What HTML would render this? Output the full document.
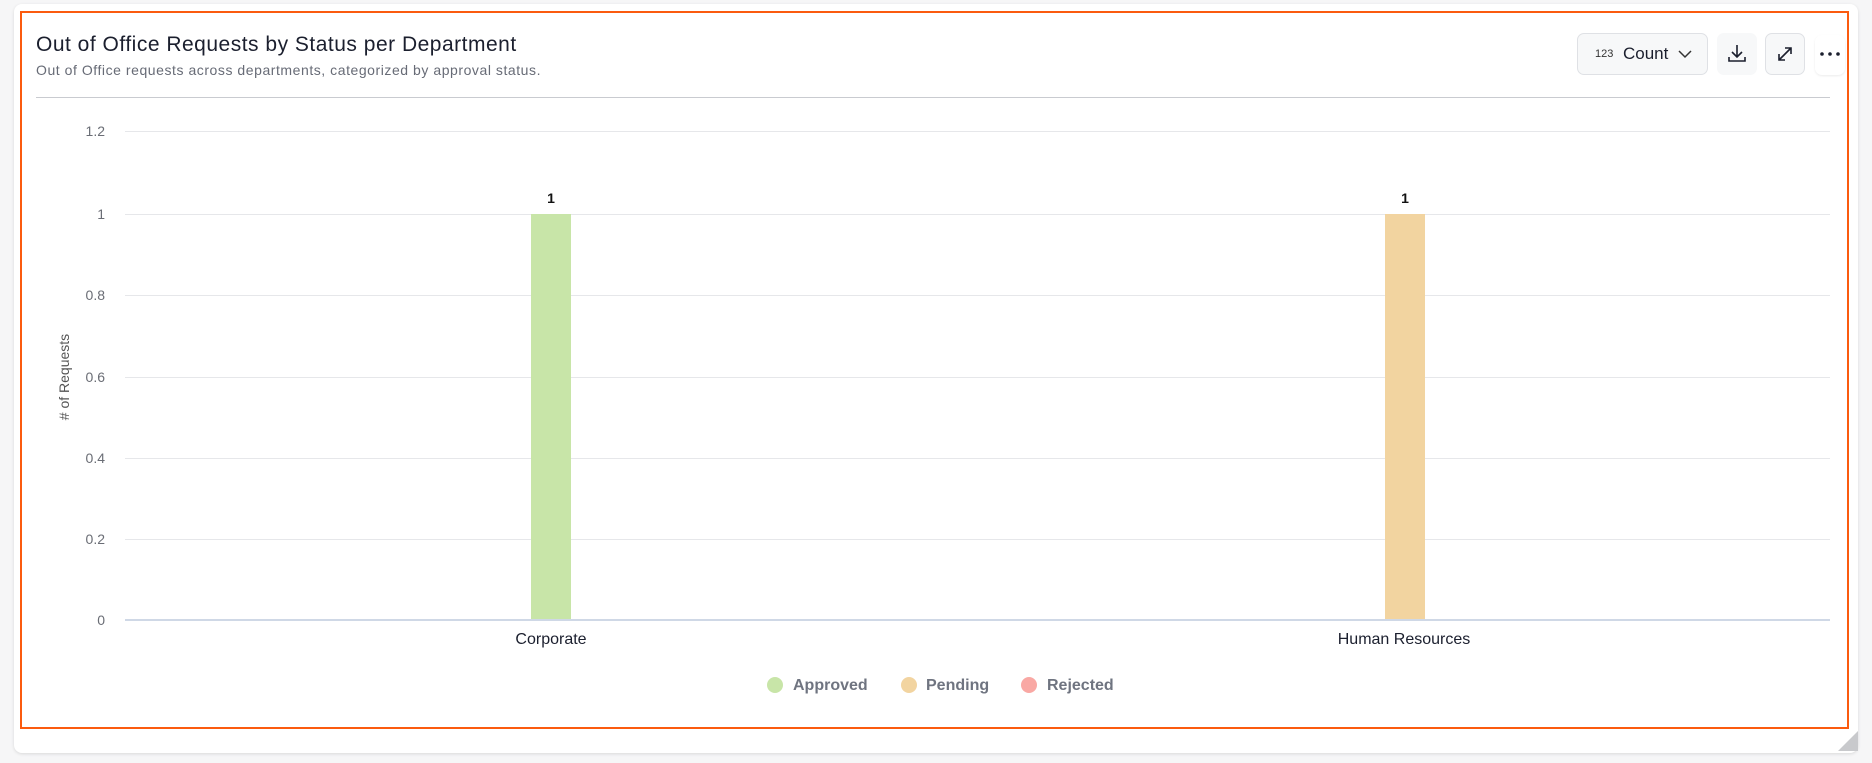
<!DOCTYPE html>
<html><head><meta charset="utf-8"><style>
*{margin:0;padding:0;box-sizing:border-box}
body{width:1872px;height:763px;background:#f6f6f7;font-family:"Liberation Sans",sans-serif;position:relative;overflow:hidden}
.card{position:absolute;left:14px;top:4px;width:1844px;height:749px;background:#fff;border-radius:8px;box-shadow:0 1px 3px rgba(0,0,0,.12)}
.frame{position:absolute;left:20px;top:11px;width:1829px;height:718px;border:2px solid #fb5b0f}
.abs{position:absolute}
.title{left:36px;top:33px;font-size:21px;letter-spacing:0.5px;color:#1b1f2e}
.sub{left:36px;top:62px;font-size:14px;letter-spacing:0.55px;color:#676b76}
.hl{left:36px;top:97px;width:1794px;height:1px;background:#c9cbd0}
.grid{left:125px;width:1705px;height:1px;background:#e6e7ea}
.yl{width:60px;left:45px;text-align:right;font-size:14px;color:#6a6d75}
.btn{border:1px solid #dfe1e5;background:#f7f8f9;border-radius:7px}
.leg{top:677px;font-size:16px;font-weight:bold;color:#6f7480}
.dot{width:16px;height:16px;border-radius:50%;top:677px}
</style></head><body>
<div class="card"></div>
<div class="frame"></div>
<div class="abs title">Out of Office Requests by Status per Department</div>
<div class="abs sub">Out of Office requests across departments, categorized by approval status.</div>
<div class="abs hl"></div>

<div class="abs btn" style="left:1577px;top:33px;width:131px;height:42px"></div>
<div class="abs" style="left:1595px;top:48px;font-size:11px;color:#333">123</div>
<div class="abs" style="left:1623px;top:44px;font-size:17px;color:#1b1f2e">Count</div>
<svg class="abs" style="left:1677px;top:48px" width="16" height="12" viewBox="0 0 16 12"><path d="M2 3l6 6 6-6" fill="none" stroke="#333" stroke-width="1.5"/></svg>
<div class="abs" style="left:1717px;top:33px;width:40px;height:42px;background:#f7f8f9;border-radius:7px"></div>
<svg class="abs" style="left:1725px;top:41px" width="24" height="24" viewBox="0 0 24 24"><path d="M12 4v12M7 11l5 5 5-5M4 16v4h16v-4" fill="none" stroke="#1b1f2e" stroke-width="1.6"/></svg>
<div class="abs btn" style="left:1765px;top:33px;width:40px;height:42px"></div>
<svg class="abs" style="left:1774px;top:43px" width="22" height="22" viewBox="0 0 22 22"><path d="M5 17L17 5M11 5h6v6M5 11v6h6" fill="none" stroke="#1b1f2e" stroke-width="1.6"/></svg>
<div class="abs" style="left:1815px;top:35px;width:30px;height:40px;background:#fff;border-radius:7px;box-shadow:0 1px 2px rgba(0,0,0,.08)"></div>
<svg class="abs" style="left:1817px;top:50px" width="26" height="8" viewBox="0 0 26 8"><circle cx="5" cy="4" r="1.8" fill="#1b1f2e"/><circle cx="13" cy="4" r="1.8" fill="#1b1f2e"/><circle cx="21" cy="4" r="1.8" fill="#1b1f2e"/></svg>

<div class="abs grid" style="top:131px"></div>
<div class="abs grid" style="top:214px"></div>
<div class="abs grid" style="top:295px"></div>
<div class="abs grid" style="top:377px"></div>
<div class="abs grid" style="top:458px"></div>
<div class="abs grid" style="top:539px"></div>
<div class="abs grid" style="top:619px;height:2px;background:#cfd8e6"></div>
<div class="abs yl" style="top:123px">1.2</div>
<div class="abs yl" style="top:206px">1</div>
<div class="abs yl" style="top:287px">0.8</div>
<div class="abs yl" style="top:369px">0.6</div>
<div class="abs yl" style="top:450px">0.4</div>
<div class="abs yl" style="top:531px">0.2</div>
<div class="abs yl" style="top:612px">0</div>
<div class="abs" style="left:4px;top:369px;width:120px;text-align:center;font-size:14px;color:#555;transform:rotate(-90deg);transform-origin:center">
# of Requests</div>

<div class="abs" style="left:531px;top:214px;width:40px;height:405px;background:#c8e5a8"></div>
<div class="abs" style="left:1385px;top:214px;width:40px;height:405px;background:#f2d4a0"></div>
<div class="abs" style="left:531px;top:190px;width:40px;text-align:center;font-size:14px;font-weight:bold;color:#111">1</div>
<div class="abs" style="left:1385px;top:190px;width:40px;text-align:center;font-size:14px;font-weight:bold;color:#111">1</div>
<div class="abs" style="left:451px;top:631px;width:200px;text-align:center;font-size:16px;color:#1b1f2e">Corporate</div>
<div class="abs" style="left:1304px;top:631px;width:200px;text-align:center;font-size:16px;color:#1b1f2e">Human Resources</div>

<div class="abs dot" style="left:767px;background:#c8e5a8"></div>
<div class="abs leg" style="left:793px">Approved</div>
<div class="abs dot" style="left:901px;background:#f2d4a0"></div>
<div class="abs leg" style="left:926px">Pending</div>
<div class="abs dot" style="left:1021px;background:#f9a8a4"></div>
<div class="abs leg" style="left:1047px">Rejected</div>

<svg class="abs" style="left:1838px;top:731px" width="20" height="20" viewBox="0 0 20 20"><path d="M20 0V20H0Z" fill="#c8c9cc"/></svg>
</body></html>
